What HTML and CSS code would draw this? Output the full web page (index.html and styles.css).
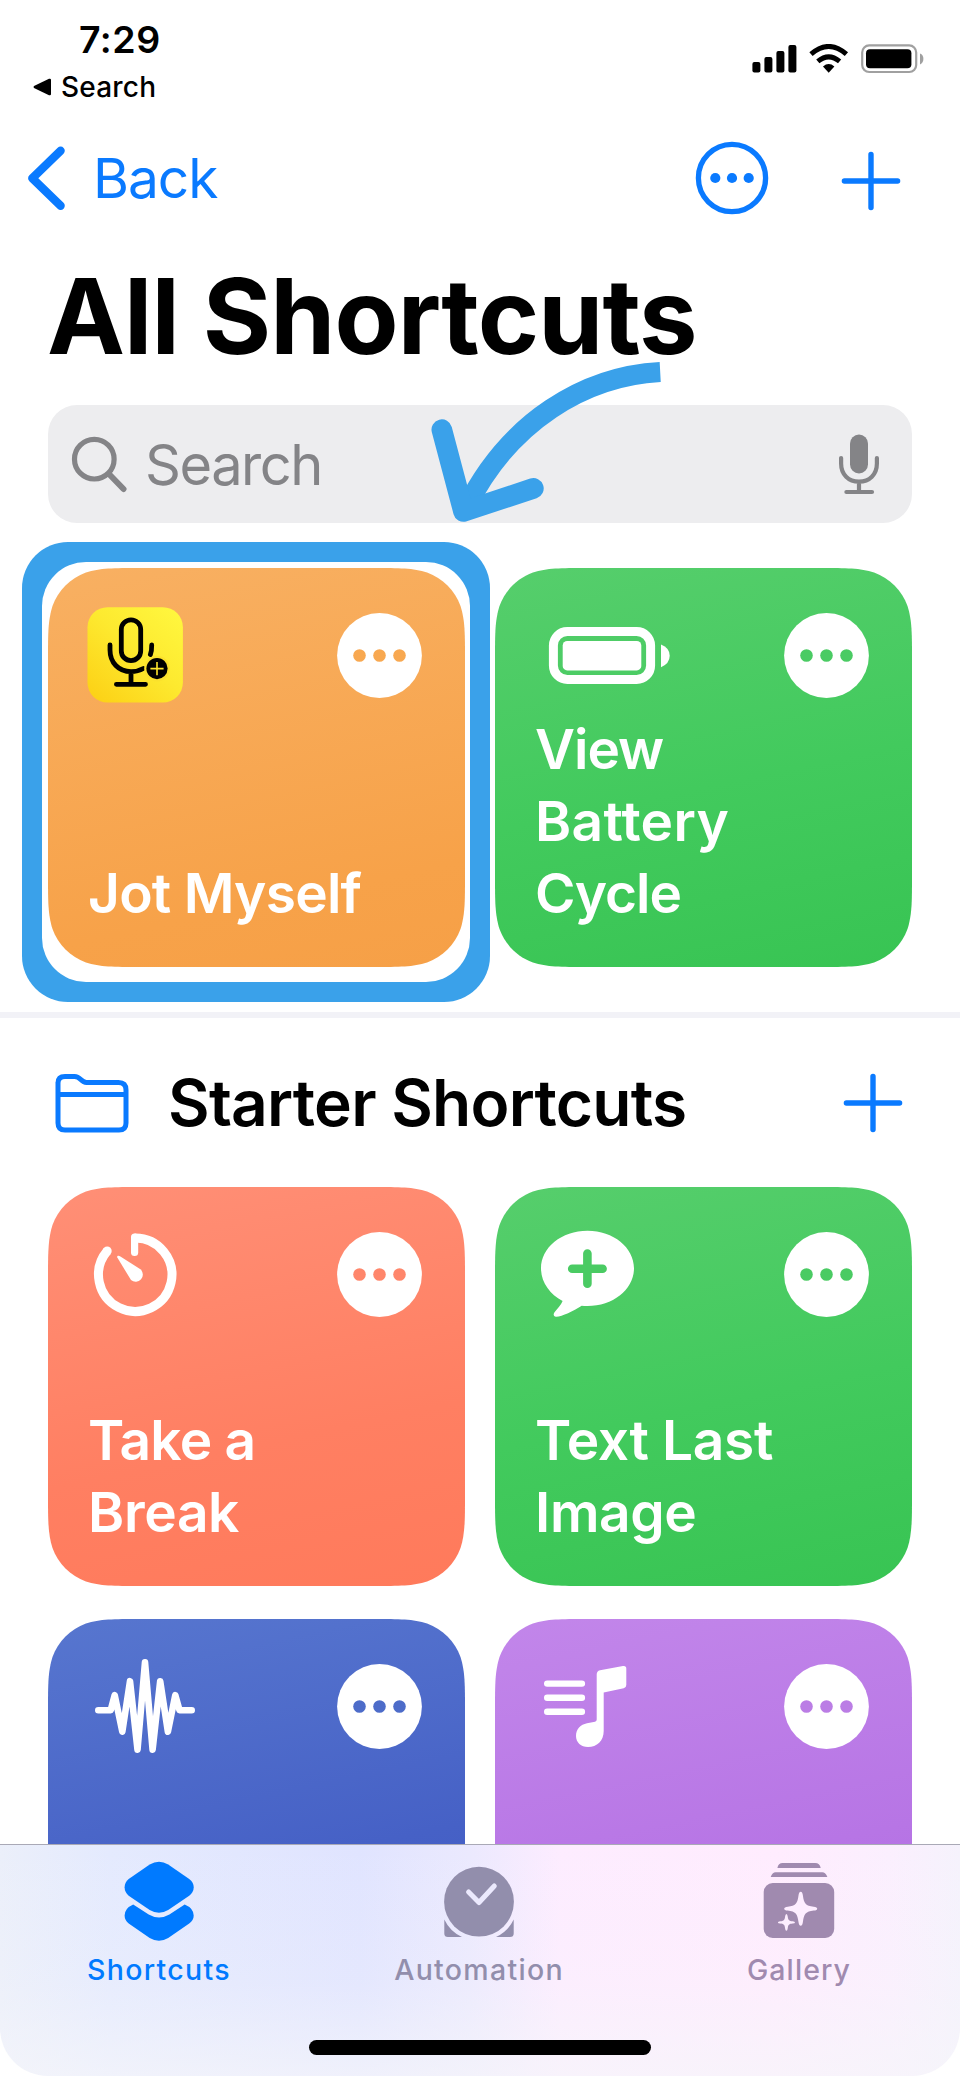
FILE: index.html
```html
<!DOCTYPE html>
<html lang="en">
<head>
<meta charset="utf-8">
<title>All Shortcuts</title>
<link rel="stylesheet" href="styles.css">
</head>
<body>
<svg class="defs" width="0" height="0" aria-hidden="true">
  <symbol id="more" viewBox="0 0 85 85">
    <circle cx="42.5" cy="42.5" r="42.4" fill="#fff"/>
    <g fill="currentColor"><circle cx="22.5" cy="42.5" r="6.3"/><circle cx="42.5" cy="42.5" r="6.3"/><circle cx="62.5" cy="42.5" r="6.3"/></g>
  </symbol>
  <symbol id="plus" viewBox="0 0 60 60">
    <path d="M30 3.4V56.6M3.4 30H56.6" fill="none" stroke="currentColor" stroke-width="5.4" stroke-linecap="round"/>
  </symbol>
</svg>
<div class="phone">
  <main class="screen">
    <header class="status">
      <div class="status-left">
        <div class="time">7:29</div>
        <div class="return"><svg width="18" height="18" viewBox="0 0 18 18"><path d="M1 8Q0 9 1 10L16 17.2Q18 17.8 18 16V2Q18 .2 16 .8Z"/></svg><span>Search</span></div>
      </div>
      <svg class="status-icons" width="173" height="30" viewBox="752 44 173 30">
        <rect x="752.4" y="62" width="8" height="10.4" rx="2"/><rect x="764.4" y="57" width="8" height="15.4" rx="2"/><rect x="776.4" y="51" width="8" height="21.4" rx="2"/><rect x="788.4" y="45" width="8" height="27.4" rx="2"/>
        <g fill="none" stroke="#000" stroke-width="5"><path d="M811 54.2Q828.7 38.8 846.4 54.2"/><path d="M817.8 61.4Q828.7 52.4 839.6 61.4"/></g>
        <path d="M823 66.4Q828.7 61.8 834.4 66.4L828.7 72.8Z"/>
        <rect x="862.2" y="45.4" width="54" height="26.6" rx="7" fill="none" stroke="#a0a0a0" stroke-width="2.2"/>
        <rect x="866" y="49.3" width="45.4" height="19" rx="4"/>
        <path d="M920 53.6Q923.4 55 923.4 59T920 64.4Z" fill="#a0a0a0"/>
      </svg>
    </header>

    <nav class="nav">
      <svg width="38" height="66" viewBox="27 145 38 66"><path d="M60.6 150.8L32.3 178.2L60.6 205.8" fill="none" stroke="currentColor" stroke-width="8.4" stroke-linecap="round" stroke-linejoin="round"/></svg>
      <span class="nav-back">Back</span>
      <svg class="nav-more" width="74" height="74" viewBox="-37 -37 74 74"><circle r="33.6" fill="none" stroke="currentColor" stroke-width="5.3"/><g fill="currentColor"><circle cx="-16.7" r="5.1"/><circle r="5.1"/><circle cx="16.7" r="5.1"/></g></svg>
      <svg class="nav-plus" width="60" height="60"><use href="#plus"/></svg>
    </nav>

    <h1 class="title">All Shortcuts</h1>

    <div class="search">
      <svg width="58" height="58" viewBox="70 433 58 58" fill="none" stroke="currentColor" stroke-linecap="round"><circle cx="94.3" cy="457.2" r="19.8" stroke-width="5.2"/><path d="M109 472L123.5 487" stroke-width="6"/></svg>
      <span class="search-label">Search</span>
      <svg class="search-mic" width="44" height="62" viewBox="837 433 44 62"><rect x="850" y="434.6" width="18" height="38.8" rx="9" fill="currentColor"/><path d="M841.1 458V463.5C841.1 474.5 848.5 481.6 859 481.6S876.9 474.5 876.9 463.5V458M859 481.6V492M846.4 492H872" fill="none" stroke="currentColor" stroke-width="4.2" stroke-linecap="round"/></svg>
      <svg class="arrow" width="240" height="180" viewBox="428 352 240 180" fill="none" stroke="#3aa1ea"><path d="M660.2 372C585 376 509 421 466 508" stroke-width="20"/><path d="M441.8 429.6L463.5 511.5L533.4 488.4" stroke-width="20.6" stroke-linecap="round" stroke-linejoin="round"/></svg>
    </div>

    <section class="grid grid-top">
      <div class="marked">
        <article class="card orange">
          <div class="card-head">
            <svg width="150" height="110" viewBox="30 30 150 110">
              <defs><linearGradient id="yellow" x1="1" y1="0" x2="0.1" y2="1"><stop offset="0" stop-color="#fff840"/><stop offset=".5" stop-color="#fde92f"/><stop offset="1" stop-color="#fcd116"/></linearGradient></defs>
              <rect x="39.5" y="39.2" width="95.4" height="95.4" rx="20" fill="url(#yellow)"/>
              <g fill="none" stroke="#000" stroke-width="4.8" stroke-linecap="round"><rect x="73.3" y="51.8" width="19.4" height="40.8" rx="9.7"/><path d="M62 77V82C62 94.5 70.5 103.6 83 103.6Q90 103.6 95.3 100.5M103.7 77Q103.8 83 102.4 86.5M83 103.6V116.3M68.4 116.3H97.5"/></g>
              <circle cx="109" cy="100.6" r="12.8" fill="#fbe12d"/><circle cx="109" cy="100.6" r="10.6"/><path d="M109 94V107.2M102.4 100.6H115.6" stroke="#ffe62e" stroke-width="1.6"/>
            </svg>
            <svg class="more" width="85" height="85"><use href="#more"/></svg>
          </div>
          <h3>Jot Myself</h3>
        </article>
      </div>
      <article class="card green">
        <div class="card-head">
          <svg width="150" height="110" viewBox="30 30 150 110"><rect x="58.4" y="63.5" width="97.2" height="48" rx="14" fill="none" stroke="#fff" stroke-width="9"/><rect x="67.7" y="73" width="78.6" height="29.4" rx="4.5" fill="#fff"/><path d="M166 76.6Q174.7 80 174.7 87.8T166 99.2Z" fill="#fff"/></svg>
          <svg class="more" width="85" height="85"><use href="#more"/></svg>
        </div>
        <h3><span class="snug">View</span><br><span class="wide">Battery</span><br><span class="snug">Cycle</span></h3>
      </article>
    </section>

    <div class="divider"></div>

    <div class="folder">
      <svg width="74" height="60" viewBox="55.5 1072 74 60" fill="none" stroke="currentColor" stroke-width="5"><path d="M58.5 1081V1122Q58.5 1129 65.5 1129H119.5Q126.5 1129 126.5 1122V1089Q126.5 1081.5 119 1081.5H87C81 1081.5 81.5 1075.5 75 1075.5H65.5Q58.5 1075.5 58.5 1082ZM58.5 1093.4H126.5"/></svg>
      <h2>Starter Shortcuts</h2>
      <svg class="folder-plus" width="60" height="60"><use href="#plus"/></svg>
    </div>

    <section class="grid">
      <article class="card coral">
        <div class="card-head">
          <svg width="150" height="110" viewBox="30 30 150 110"><path d="M86.6 51A36.7 36.7 0 1 1 59.2 64" fill="none" stroke="#fff" stroke-width="9"/><circle cx="59.2" cy="64" r="4.5" fill="#fff"/><path d="M86.6 50V65.5" fill="none" stroke="#fff" stroke-width="7.2" stroke-linecap="round"/><path d="M69.3 70.6C68.6 68.7 70.5 68.2 72.4 69.4L92.4 82.3A7.1 7.1 0 1 1 83 93Z" fill="#fff"/></svg>
          <svg class="more" width="85" height="85"><use href="#more"/></svg>
        </div>
        <h3>Take a<br><span class="loose">Break</span></h3>
      </article>
      <article class="card green">
        <div class="card-head">
          <svg width="150" height="110" viewBox="30 30 150 110"><path d="M92.5 43.7C118.5 43.7 139 60.5 139 81.3S118.5 119 92.5 119Q89 119 86.7 118.8C78 124 67 130 61 129.8C58.5 129.6 58 127.2 59.5 125.2C62.5 121.5 66 118 67.6 114C54.5 107 46 95 46 81.3C46 60.5 66.5 43.7 92.5 43.7Z" fill="#fff"/><path d="M92.4 66.5V96.8M77.2 81.7H107.6" stroke="currentColor" stroke-width="8.6" stroke-linecap="round"/></svg>
          <svg class="more" width="85" height="85"><use href="#more"/></svg>
        </div>
        <h3><span class="loose">Text Last</span><br><span class="loose">Image</span></h3>
      </article>
      <article class="card blue">
        <div class="card-head">
          <svg width="150" height="110" viewBox="30 30 150 110"><path d="M50.3 91.2H62.7L66.7 76.2L74.3 112.7L82 62.2L89.5 130.7L97 43.2L104.6 130.7L112.2 62.2L119.9 112.7L127.3 76.2L131.5 91.2H143.7" fill="none" stroke="#fff" stroke-width="6.6" stroke-linecap="round" stroke-linejoin="round"/></svg>
          <svg class="more" width="85" height="85"><use href="#more"/></svg>
        </div>
      </article>
      <article class="card purple">
        <div class="card-head">
          <svg width="150" height="110" viewBox="30 30 150 110"><path d="M52.2 64.6H86.9M52.2 78.7H86.9M52.2 92.8H86.9" stroke="#fff" stroke-width="6.4" stroke-linecap="round"/><path d="M101.7 55.5Q101.7 52 105 51.3L128 47Q131.3 46.5 131.3 49.5V66Q131.3 68.7 128.7 69.3L108.7 73.5V112C108.7 122 102 128 93 128C86 128 81 123.5 81 117C81 110 85.5 105.6 92 104.3L100 102.8Q101.7 102.4 101.7 100.5Z" fill="#fff"/></svg>
          <svg class="more" width="85" height="85"><use href="#more"/></svg>
        </div>
      </article>
    </section>
  </main>

  <footer class="tabs">
    <div class="tab-row">
      <div class="tab active">
        <svg width="80" height="84" viewBox="119.3 15 80 84" fill="currentColor"><path d="M150 19.5Q159.3 14 168.500 19.5L189.500 34Q194 37.500 194 42.300T189.500 50.800L168.500 65Q159.300 70.500 150 65L129 50.800Q124.900 47 124.900 42.300T129 34Z"/><path d="M133.500 59.400L149 69.500Q159.300 75.500 169.700 69.500L185 59.400Q194 63.200 194 70.500Q194 75.300 189.500 78.500L168.500 93Q159.300 98.500 150 93L129 78.500Q124.900 75 124.900 70.500Q124.900 63.200 133.500 59.400Z"/></svg>
        <span>Shortcuts</span>
      </div>
      <div class="tab automation">
        <svg width="80" height="84" viewBox="439 15 80 84" fill="currentColor"><circle cx="479" cy="56.7" r="34.9"/><path d="M444.3 74.5Q450 86.5 462 92H448Q444.3 92 444.3 88.5ZM513.7 74.5Q508 86.5 496 92H510Q513.7 92 513.7 88.5Z"/><path d="M468.6 47L479 57.5L494.3 41" fill="none" stroke="#ebe9fd" stroke-width="5" stroke-linecap="round" stroke-linejoin="round"/></svg>
        <span>Automation</span>
      </div>
      <div class="tab gallery">
        <svg width="80" height="84" viewBox="759.3 15 80 84" fill="currentColor"><path d="M777.7 23Q778.5 18 783 18H815.500Q820 18 821 23ZM771 32Q772.500 27.300 776 27.300H822.500Q826 27.300 827.700 32Z"/><rect x="764" y="38" width="70.5" height="55" rx="9"/><path d="M801 46.7Q802.8 46.7 803.2 50.5C804.2 58.5 806 60.8 814 61.8Q817.5 62.2 817.5 63.7T814 65.6C806 66.6 804.2 69 803.2 77Q802.8 80.7 801 80.7T798.8 77C797.8 69 796 66.6 788 65.6Q784.5 65.2 784.5 63.7T788 61.8C796 60.8 797.8 58.5 798.8 50.5Q799.2 46.7 801 46.7ZM786.7 69Q787.7 69 788 71.5C788.5 75.2 789.3 76 793 76.3Q795.3 76.6 795.3 77.4T793 78.5C789.3 78.8 788.5 79.6 788 83.5Q787.7 85.8 786.7 85.8T785.4 83.5C785 79.6 784.1 78.8 780.4 78.5Q778.2 78.2 778.2 77.4T780.4 76.3C784.1 76 785 75.2 785.4 71.5Q785.7 69 786.7 69Z" fill="#fdeeff"/></svg>
        <span>Gallery</span>
      </div>
    </div>
    <div class="home-bar"></div>
  </footer>
</div>
</body>
</html>
```
FILE: styles.css
```css
* { box-sizing: border-box; }
body { margin: 0; background: #fff; font-family: Inter, "Liberation Sans", sans-serif; color: #000; }
svg { display: block; flex: none; }
.defs { position: absolute; }
h1, h2, h3 { margin: 0; white-space: nowrap; }
.phone { width: 960px; height: 2079px; overflow: hidden; }
.screen { height: 1844px; overflow: hidden; }

.status { height: 118px; display: flex; justify-content: space-between; padding: 20px 35px 0 33px; }
.time { font-size: 37.5px; font-weight: 600; line-height: 40px; padding-left: 46px; letter-spacing: 0.5px; }
.return { display: flex; align-items: center; gap: 10px; margin-top: 10px; font-size: 28px; font-weight: 500; line-height: 34px; letter-spacing: 0.2px; }
.status-icons { margin-top: 24px; }

.nav { height: 120px; display: flex; align-items: center; padding: 0 59px 0 27px; color: #0a7aff; }
.nav-back { margin-left: 28px; font-size: 55px; line-height: 66px; letter-spacing: -1px; }
.nav-more { margin-left: auto; }
.nav-plus { margin: 5px 0 0 72px; }

.title { margin: 18px 0 0 47px; font-size: 104.5px; line-height: 120px; font-weight: 700; letter-spacing: -0.9px; }

.search { position: relative; display: flex; align-items: center; height: 118px; margin: 29px 48px 0; padding: 0 31px 0 22px; border-radius: 29px; background: #ededef; color: #848487; }
.search-label { margin: 2px 0 0 17px; font-size: 56px; line-height: 68px; letter-spacing: -1.5px; }
.search-mic { margin-left: auto; }
.arrow { position: absolute; left: 380px; top: -53px; z-index: 3; }

.grid { display: grid; grid-template-columns: 417px 417px; gap: 33px 30px; padding: 0 48px; }
.grid-top { padding-top: 45px; padding-bottom: 45px; }
.card { position: relative; display: flex; flex-direction: column; justify-content: space-between; width: 417px; height: 399px; padding: 30px 43px 38px 30px; color: #fff; clip-path: path("M91.7 0H325.3C351.7 0 364.9 0 379.1 4.5C394.6 10.1 406.9 22.4 412.5 37.9C417 52.1 417 65.3 417 91.7V307.3C417 333.7 417 346.9 412.5 361.1C406.9 376.6 394.6 388.9 379.1 394.5C364.9 399 351.7 399 325.3 399H91.7C65.3 399 52.1 399 37.9 394.5C22.4 388.9 10.1 376.6 4.5 361.1C0 346.9 0 333.7 0 307.3V91.7C0 65.3 0 52.1 4.5 37.9C10.1 22.4 22.4 10.1 37.9 4.5C52.1 0 65.3 0 91.7 0Z"); }
.card-head { display: flex; justify-content: space-between; }
.card-head .more { margin-top: 15px; }
.card h3 { padding-left: 10px; font-size: 55px; line-height: 72px; font-weight: 600; letter-spacing: -0.75px; color: #fff; }
.card .snug { letter-spacing: -1px; }
.card .loose { letter-spacing: -0.35px; }
.card .wide { letter-spacing: 0.3px; }
.orange { background: linear-gradient(168deg, #f8b062, #f7a249 78%, #f6a047); color: #f8a850; }
.green { background: linear-gradient(168deg, #56ce6c, #42ca5d 54%, #38c453); color: #4acb63; }
.coral { background: linear-gradient(168deg, #ff8f76, #ff7f62 62%, #ff7a5b); color: #ff866b; }
.blue { background: linear-gradient(168deg, #5776cf, #4661c6 60%, #3f57c3); color: #4d6cc9; }
.purple { background: linear-gradient(168deg, #c286ea, #b775e5 60%, #b06ae0); color: #bb7de5; }

.marked { position: relative; }
.marked::before { content: ""; position: absolute; inset: -26px -25px -35px -26px; border-radius: 46px; background: #3aa1ea; }
.marked::after { content: ""; position: absolute; inset: -6px -5px -15px -6px; border-radius: 44px; background: #fff; }
.marked .card { z-index: 2; }

.divider { height: 6px; background: #f2f2f7; }
.folder { display: flex; align-items: center; height: 169px; padding: 0 57px 0 55px; color: #0a7aff; }
.folder h2 { margin-left: 39px; font-size: 64px; line-height: 78px; font-weight: 600; letter-spacing: -0.75px; color: #000; }
.folder-plus { margin-left: auto; }

.tabs { position: relative; height: 232px; border-radius: 0 0 48px 48px; background: linear-gradient(180deg, rgba(246,246,250,0) 0%, rgba(246,246,250,0.2) 60%, rgba(246,246,250,0.7) 100%), linear-gradient(90deg, #ebeffa 0, #e4eafe 110px, #e0e4ff 360px, #ebe9fe 470px, #fdecff 560px, #ffecfe 780px, #fbeffe 890px, #f5f2fc 960px); }
.tabs::before { content: ""; display: block; height: 1px; background: #a9a9b6; }
.tab-row { display: grid; grid-template-columns: repeat(3, 320px); margin-left: -1px; }
.tab { display: flex; flex-direction: column; align-items: center; padding-top: 15px; font-size: 28.5px; font-weight: 500; line-height: 34px; color: #928eac; }
.tab span { margin-top: 9px; letter-spacing: 1.3px; }
.tab.active { color: #007aff; }
.tab.gallery { color: #a08aaf; }
.tab.gallery span { letter-spacing: 1.1px; }
.home-bar { width: 342px; height: 15px; margin: 53px auto 0; border-radius: 8px; background: #000; }
```
